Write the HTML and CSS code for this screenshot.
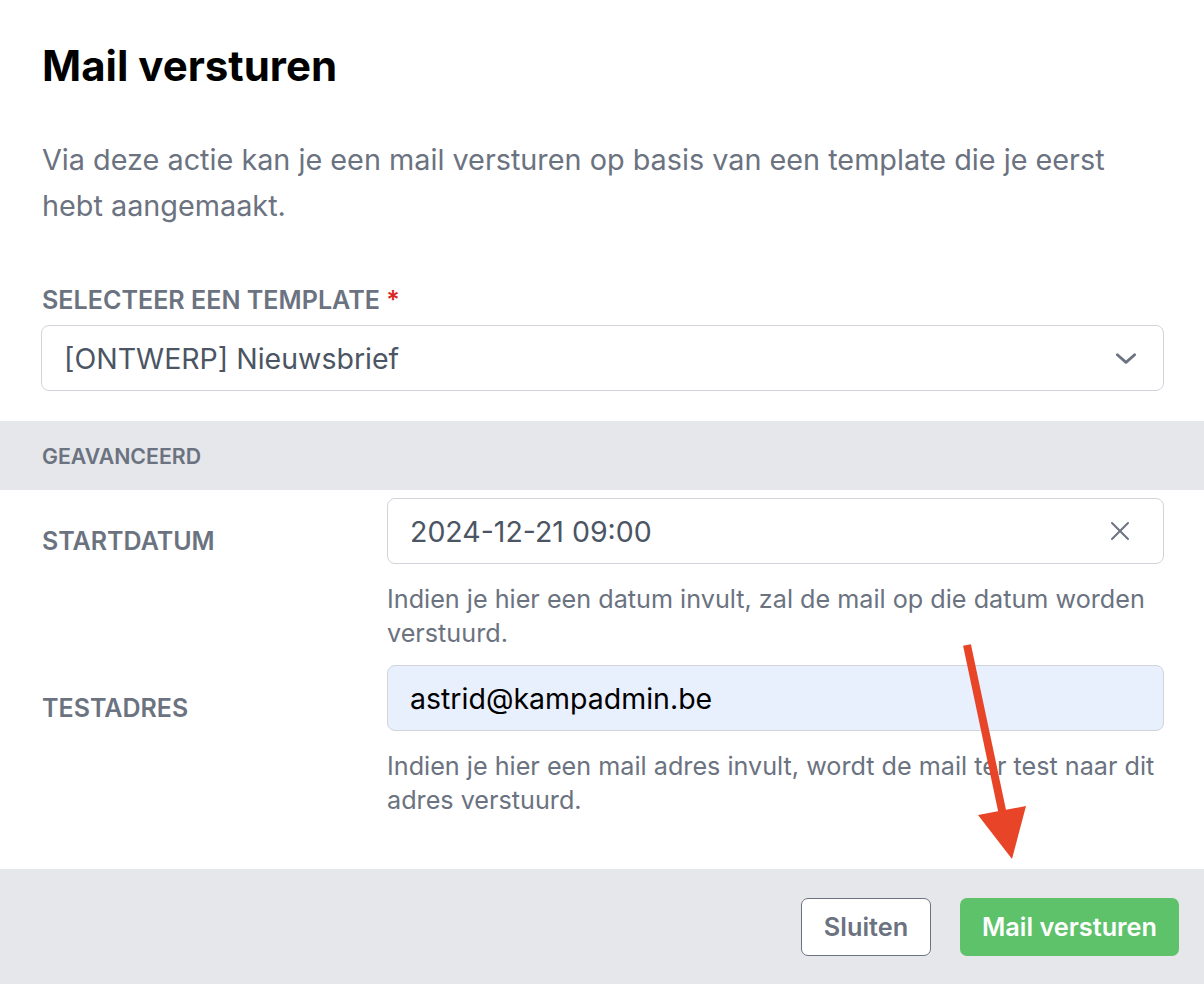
FILE: index.html
```html
<!DOCTYPE html>
<html lang="nl">
<head>
<meta charset="utf-8">
<title>Mail versturen</title>
<link rel="stylesheet" href="styles.css">
</head>
<body>
<div class="modal">
  <div class="body">
    <h1 class="title">Mail versturen</h1>
    <p class="desc">Via deze actie kan je een mail versturen op basis van een template die je eerst hebt aangemaakt.</p>
    <div class="field">
      <div class="label">SELECTEER EEN TEMPLATE <span class="req">*</span></div>
      <div class="input select">
        <span class="value">[ONTWERP] Nieuwsbrief</span>
        <svg class="icon" width="26" height="26" viewBox="0 0 24 24" fill="none" stroke="#6b7280" stroke-width="2.6" stroke-linecap="round" stroke-linejoin="round"><path d="M4 9l8 7 8-7"/></svg>
      </div>
    </div>
  </div>
  <div class="section-bar">GEAVANCEERD</div>
  <div class="rows">
    <div class="row">
      <div class="row-label">STARTDATUM</div>
      <div class="row-field">
        <div class="input">
          <span class="value">2024-12-21 09:00</span>
          <svg class="icon" width="22" height="22" viewBox="0 0 22 22" fill="none" stroke="#6b7280" stroke-width="2" stroke-linecap="round"><path d="M3 3l16 16M19 3L3 19"/></svg>
        </div>
        <p class="help">Indien je hier een datum invult, zal de mail op die datum worden verstuurd.</p>
      </div>
    </div>
    <div class="row">
      <div class="row-label">TESTADRES</div>
      <div class="row-field">
        <div class="input autofill">
          <span class="value dark">astrid@kampadmin.be</span>
        </div>
        <p class="help">Indien je hier een mail adres invult, wordt de mail ter test naar dit adres verstuurd.</p>
      </div>
    </div>
  </div>
  <div class="footer">
    <button class="btn btn-secondary">Sluiten</button>
    <button class="btn btn-primary">Mail versturen</button>
  </div>
  <svg class="arrow" width="1204" height="984" viewBox="0 0 1204 984">
    <line x1="967" y1="645" x2="1003" y2="815" stroke="#e84427" stroke-width="8"/>
    <polygon points="978,815 1026,806 1012,859" fill="#e84427"/>
  </svg>
</div>
</body>
</html>
```

FILE: styles.css
```css
* { box-sizing: border-box; }
html, body {
  margin: 0;
  padding: 0;
  background: #ffffff;
}
body {
  font-family: Inter, "Noto Sans", sans-serif;
  width: 1204px;
  height: 984px;
  overflow: hidden;
}
.modal {
  position: relative;
  width: 1204px;
  height: 984px;
  background: #ffffff;
  display: flex;
  flex-direction: column;
}
.body {
  padding: 38px 40px 30px 42px;
}
.title {
  margin: 0;
  font-size: 42px;
  line-height: 56px;
  font-weight: 700;
  color: #000000;
}
.desc {
  margin: 43px 0 0 0;
  font-size: 28.8px;
  line-height: 46px;
  color: #6b7280;
  max-width: 1110px;
}
.field {
  margin-top: 56px;
}
.label {
  font-size: 25.1px;
  line-height: 30px;
  font-weight: 600;
  color: #6b7280;
  margin-bottom: 10px;
}
.req { color: #dc2626; }
.input {
  height: 66px;
  border: 1px solid #d1d5db;
  border-radius: 8px;
  display: flex;
  align-items: center;
  justify-content: space-between;
  padding: 0 32px 0 22px;
  background: #ffffff;
}
.select { margin-left: -1px; padding-right: 24px; }
.value {
  font-size: 28.5px;
  color: #4b5563;
}
.value.dark { color: #000000; }
.autofill {
  background: #e8f0fe;
}
.section-bar {
  background: #e5e7eb;
  height: 69px;
  display: flex;
  align-items: center;
  padding-left: 42px;
  font-size: 21.3px;
  font-weight: 600;
  color: #6b7280;
}
.rows {
  padding: 8px 40px 0 42px;
  flex: 1;
}
.row {
  display: grid;
  grid-template-columns: 345px 1fr;
}
.row-label {
  font-size: 25px;
  font-weight: 600;
  color: #6b7280;
  height: 66px;
  display: flex;
  align-items: center;
  padding-top: 20px;
}
.help {
  margin: 18px 0 15px 0;
  font-size: 25.2px;
  line-height: 34px;
  color: #6b7280;
}
.footer {
  background: #e5e7eb;
  height: 115px;
  display: flex;
  justify-content: flex-end;
  align-items: center;
  gap: 29px;
  padding: 0 25px 0 0;
}
.btn {
  height: 58px;
  font-family: Inter, "Noto Sans", sans-serif;
  font-size: 25.3px;
  font-weight: 600;
  border-radius: 7px;
  padding: 0;
}
.btn-secondary {
  background: #ffffff;
  border: 1px solid #6b7280;
  color: #6b7280;
  width: 130px;
}
.btn-primary {
  background: #5ec26a;
  border: none;
  color: #ffffff;
  width: 219px;
}
.arrow {
  position: absolute;
  left: 0;
  top: 0;
  pointer-events: none;
}
```
